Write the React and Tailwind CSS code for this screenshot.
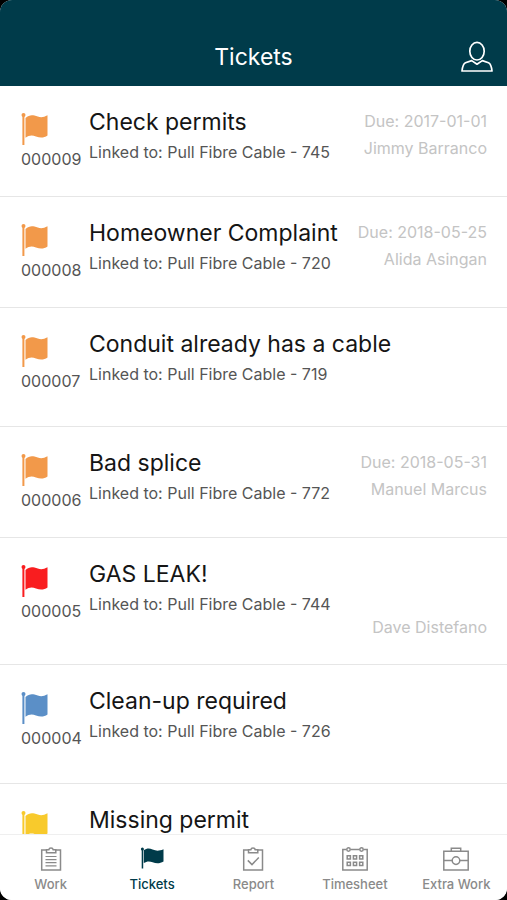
import React from "react";

const tickets = [
  { id: "000009", title: "Check permits", link: "Pull Fibre Cable - 745", due: "2017-01-01", owner: "Jimmy Barranco", flag: "text-[#f2994a]" },
  { id: "000008", title: "Homeowner Complaint", link: "Pull Fibre Cable - 720", due: "2018-05-25", owner: "Alida Asingan", flag: "text-[#f2994a]" },
  { id: "000007", title: "Conduit already has a cable", link: "Pull Fibre Cable - 719", flag: "text-[#f2994a]" },
  { id: "000006", title: "Bad splice", link: "Pull Fibre Cable - 772", due: "2018-05-31", owner: "Manuel Marcus", flag: "text-[#f2994a]" },
  { id: "000005", title: "GAS LEAK!", link: "Pull Fibre Cable - 744", owner: "Dave Distefano", flag: "text-[#f91d1f]" },
  { id: "000004", title: "Clean-up required", link: "Pull Fibre Cable - 726", flag: "text-[#5b8fc7]" },
  { title: "Missing permit", flag: "text-[#f8ca2c]" },
];

const FlagIcon = ({ className }) => (
  <svg viewBox="0 0 26 32" fill="currentColor" className={className} aria-hidden="true">
    <circle cx="2" cy="2" r="2" />
    <rect x="0.9" y="2" width="2" height="30" />
    <path d="M4 5C7 2.400 9.800 1.600 13 2.600c4 1.500 8 2.700 13-.3v20.200c-3.500 2.600-7.500 2.600-11.500 1-3.800-1.600-7-1.300-10.500 1.200z" />
  </svg>
);

const UserIcon = () => (
  <svg viewBox="0 0 32 32" fill="none" stroke="currentColor" strokeWidth="1.700" strokeLinejoin="round" className="w-8 h-8" aria-hidden="true">
    <ellipse cx="16" cy="10.200" rx="7.200" ry="8.800" />
    <path d="M10.700 19.600 4.500 21.800C2.500 22.700 1.500 25.500 1 30h30c-.5-4.500-1.500-7.300-3.500-8.200l-6.200-2.200L16 23.200z" />
  </svg>
);

const iconProps = {
  viewBox: "0 0 26 24",
  fill: "none",
  stroke: "currentColor",
  strokeWidth: "1.5",
  className: "w-[26px] h-6",
  "aria-hidden": true,
};

const WorkIcon = () => (
  <svg {...iconProps}>
    <path d="M8.500 3H3.700v20h18.800V3h-4.700" />
    <path d="M8.500 5.800V2.800h2.300C11 1.500 11.800 1 13 1s2 .5 2.200 1.800h2.600v3z" />
    <path d="M7.500 9.500h11M7.500 12.600h11M7.500 15.700h11M7.500 18.800h11" strokeWidth="1.200" />
  </svg>
);

const ReportIcon = () => (
  <svg {...iconProps}>
    <path d="M8.500 3H3.700v20h18.800V3h-4.700" />
    <path d="M8.500 5.800V2.800h2.300C11 1.500 11.800 1 13 1s2 .5 2.200 1.800h2.600v3z" />
    <path d="m7.800 13.400 4.200 4.200 6.800-7.200" />
  </svg>
);

const TimesheetIcon = () => (
  <svg {...iconProps}>
    <path d="M4.500 2.500H.8V23h24.400V2.500h-3.700M8.500 2.500h9" />
    <circle cx="6.500" cy="2.500" r="1.700" />
    <circle cx="19.500" cy="2.500" r="1.700" />
    <path d="M5.200 8.800h3.200v3.200H5.200zM11.400 8.800h3.200v3.200h-3.200zM17.600 8.800h3.200v3.200h-3.200zM5.200 15.200h3.200v3.200H5.200zM11.400 15.200h3.200v3.200h-3.200zM17.600 15.200h3.200v3.200h-3.200z" />
  </svg>
);

const ExtraWorkIcon = () => (
  <svg {...iconProps}>
    <path d="M.8 4.200h24.400V23H.8zM8.300 4.200V1.200h9.400v3" />
    <path d="M.8 13.600h8.400M16.800 13.600h8.400" />
    <circle cx="13" cy="13.600" r="3.800" />
  </svg>
);

const TicketsIcon = () => (
  <svg viewBox="0 0 24 22" fill="currentColor" className="w-6 h-[22px]" aria-hidden="true">
    <circle cx="2.400" cy="1.900" r="1.500" />
    <rect x="1.700" y="2" width="1.500" height="19.500" />
    <path d="M3.800 3.200C6.800 1.200 9.300 1 12.600 2.600c3.500 1.500 6.500 1.600 10.900-.3v12.300c-3.600 2.200-7.400 2.200-10.900.7-3.300-1.300-5.800-1.100-8.800.8z" />
  </svg>
);

const tabs = [
  { label: "Work", icon: <WorkIcon /> },
  { label: "Tickets", icon: <TicketsIcon />, active: true },
  { label: "Report", icon: <ReportIcon /> },
  { label: "Timesheet", icon: <TimesheetIcon /> },
  { label: "Extra Work", icon: <ExtraWorkIcon /> },
];

const TicketRow = ({ ticket }) => {
  const height = ticket.due ? "min-h-[111px]" : ticket.owner ? "min-h-[127px]" : "min-h-[119px]";

  return (
    <li className={`flex pl-[21px] pr-5 pt-[22px] border-b border-[#e6e6e6] ${height}`}>
      <div className="w-[68px] shrink-0 pt-[5px]">
        <FlagIcon className={`w-[27px] h-8 ${ticket.flag}`} />
        {ticket.id && <p className="mt-1 text-base leading-5 text-[#555]">{ticket.id}</p>}
      </div>
      <div className="flex-1 whitespace-nowrap">
        <h2 className="text-[23px] leading-7 text-[#151515]">{ticket.title}</h2>
        {ticket.link && <p className="mt-0.5 text-base leading-7 text-[#555]">Linked to: {ticket.link}</p>}
      </div>
      <div className="shrink-0 text-right text-base leading-[27px] text-[#c4c4c4]">
        {ticket.due && <p>Due: {ticket.due}</p>}
        {ticket.owner && <p className={ticket.due ? "" : "pt-[54px]"}>{ticket.owner}</p>}
      </div>
    </li>
  );
};

const App = () => {
  return (
    <div className="bg-black font-['Inter',sans-serif]">
      <div className="flex flex-col h-screen bg-white rounded-xl overflow-hidden">
        <header className="grid grid-cols-[1fr_auto_1fr] items-center shrink-0 h-[86px] pt-7 px-3.5 bg-[#003b4a] text-white">
          <h1 className="col-start-2 text-[23px]">Tickets</h1>
          <button type="button" aria-label="Profile" className="justify-self-end">
            <UserIcon />
          </button>
        </header>

        <main className="flex-1 min-h-0 overflow-y-auto [scrollbar-width:none]">
          <ul>
            {tickets.map((ticket) => (
              <TicketRow key={ticket.title} ticket={ticket} />
            ))}
          </ul>
        </main>

        <nav className="grid grid-cols-5 shrink-0 h-[66px] pt-3 border-t border-[#efefef] bg-white">
          {tabs.map((tab) => (
            <a
              key={tab.label}
              href="#"
              className={`flex flex-col items-center text-[13px] leading-5 font-medium whitespace-nowrap ${
                tab.active ? "text-[#003b4a]" : "text-[#8a8a8a]"
              }`}
            >
              <span className="flex items-start h-[27px]">{tab.icon}</span>
              {tab.label}
            </a>
          ))}
        </nav>
      </div>
    </div>
  );
};

export default App;
